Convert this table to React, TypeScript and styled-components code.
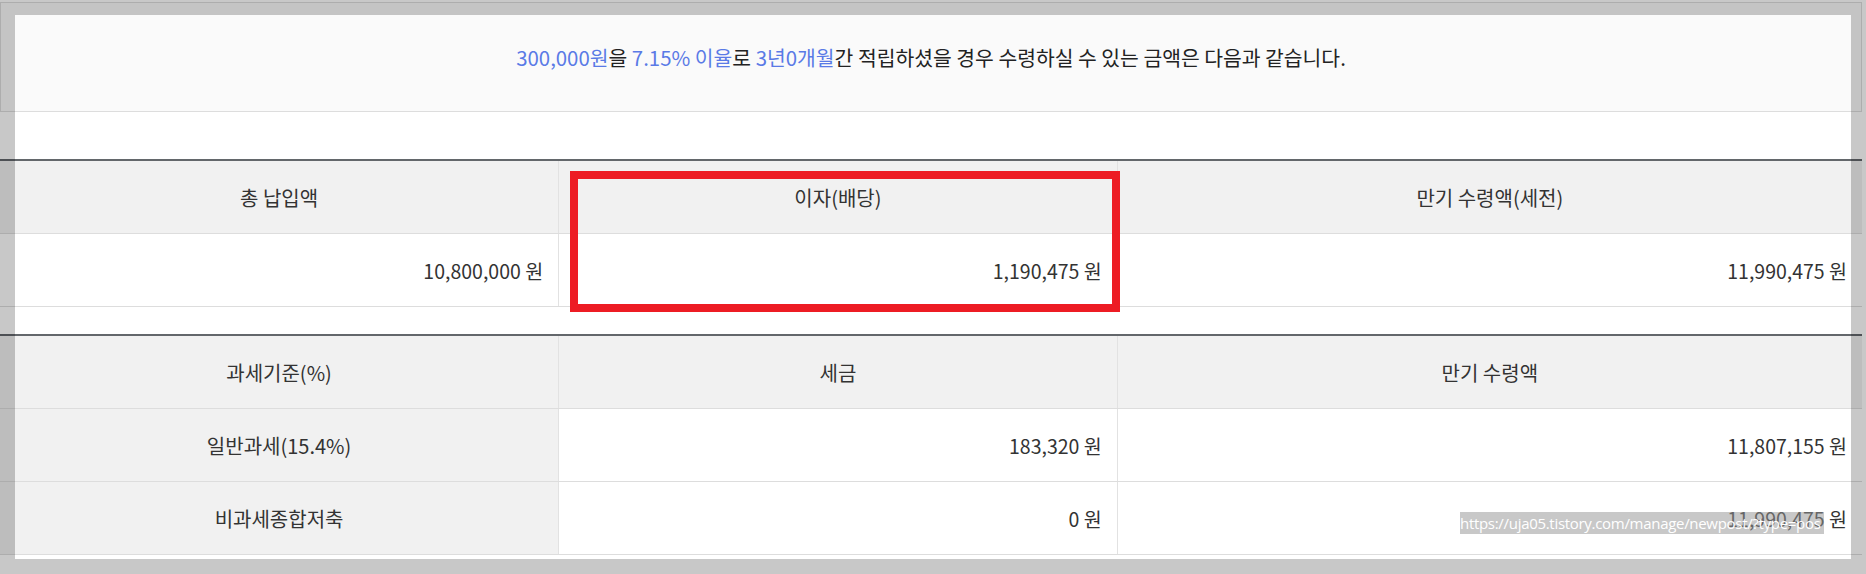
import styled, { createGlobalStyle } from 'styled-components';

const GlobalStyle = createGlobalStyle`
    html, body {
        margin: 0;
        padding: 0;
        background: #fff;
    }
    body {
        font-family: "Noto Sans CJK KR", "Noto Sans", sans-serif;
        color: #333;
    }
`;

const Page = styled.div`
    position: relative;
    width: 1862px;
    padding-top: 2px;
`;

const Notice = styled.div`
    box-sizing: border-box;
    height: 110px;
    border: 1px solid #ddd;
    background: #fafafa;
    display: flex;
    align-items: center;
    justify-content: center;
    font-size: 20.4px;
    color: #222;
`;

const Hl = styled.span`
    color: #5a7ae6;
`;

const TableWrap = styled.div<{ $gap: number }>`
    position: relative;
    margin-top: ${p => p.$gap}px;
`;

const Table = styled.table`
    width: 100%;
    table-layout: fixed;
    border-collapse: collapse;
    border-top: 2px solid #63676b;
    font-size: 20px;
`;

const HeadCell = styled.th`
    height: 72px;
    padding: 0 15px;
    background: #f1f1f1;
    font-weight: 400;
    color: #333;
    text-align: center;
    border-bottom: 1px solid #ddd;
    border-left: 1px solid #e2e2e2;
    &:first-child {
        border-left: none;
    }
`;

const ValueCell = styled.td`
    height: 72px;
    padding: 0 15px;
    text-align: right;
    font-size: 19.5px;
    color: #333;
    border-bottom: 1px solid #ddd;
    border-left: 1px solid #e2e2e2;
    &:first-child {
        border-left: none;
    }
`;

const Marker = styled.div`
    position: absolute;
    left: 570px;
    top: 12px;
    width: 550px;
    height: 141px;
    box-sizing: border-box;
    border: 8px solid #ed1c24;
    pointer-events: none;
`;

const UrlTip = styled.div`
    position: absolute;
    left: 1460px;
    top: 512px;
    height: 22px;
    padding-right: 3px;
    white-space: nowrap;
    background: rgba(150, 150, 150, 0.52);
    color: #fff;
    font-family: "Open Sans", "Noto Sans", sans-serif;
    font-size: 15px;
    line-height: 22px;
    letter-spacing: -0.3px;
`;

const Dimmer = styled.div`
    position: fixed;
    inset: 0;
    box-sizing: border-box;
    border: 15px solid rgba(0, 0, 0, 0.216);
    pointer-events: none;
`;

const won = (v: string) => `${v} 원`;

export default function App() {
    return (
        <>
            <GlobalStyle />
            <Page>
                <Notice>
                    <span>
                        <Hl>300,000원</Hl>을 <Hl>7.15% 이율</Hl>로 <Hl>3년0개월</Hl>간 적립하셨을 경우 수령하실 수 있는 금액은 다음과 같습니다.
                    </span>
                </Notice>

                <TableWrap $gap={47}>
                    <Table>
                        <colgroup>
                            <col style={{ width: '30%' }} />
                            <col style={{ width: '30%' }} />
                            <col style={{ width: '40%' }} />
                        </colgroup>
                        <thead>
                            <tr>
                                <HeadCell>총 납입액</HeadCell>
                                <HeadCell>이자(배당)</HeadCell>
                                <HeadCell>만기 수령액(세전)</HeadCell>
                            </tr>
                        </thead>
                        <tbody>
                            <tr>
                                <ValueCell>{won('10,800,000')}</ValueCell>
                                <ValueCell>{won('1,190,475')}</ValueCell>
                                <ValueCell>{won('11,990,475')}</ValueCell>
                            </tr>
                        </tbody>
                    </Table>
                    <Marker />
                </TableWrap>

                <TableWrap $gap={27}>
                    <Table>
                        <colgroup>
                            <col style={{ width: '30%' }} />
                            <col style={{ width: '30%' }} />
                            <col style={{ width: '40%' }} />
                        </colgroup>
                        <thead>
                            <tr>
                                <HeadCell>과세기준(%)</HeadCell>
                                <HeadCell>세금</HeadCell>
                                <HeadCell>만기 수령액</HeadCell>
                            </tr>
                        </thead>
                        <tbody>
                            <tr>
                                <HeadCell>일반과세(15.4%)</HeadCell>
                                <ValueCell>{won('183,320')}</ValueCell>
                                <ValueCell>{won('11,807,155')}</ValueCell>
                            </tr>
                            <tr>
                                <HeadCell>비과세종합저축</HeadCell>
                                <ValueCell>{won('0')}</ValueCell>
                                <ValueCell>{won('11,990,475')}</ValueCell>
                            </tr>
                        </tbody>
                    </Table>
                </TableWrap>

                <UrlTip>https://uja05.tistory.com/manage/newpost/?type=pos</UrlTip>
            </Page>
            <Dimmer />
        </>
    );
}
